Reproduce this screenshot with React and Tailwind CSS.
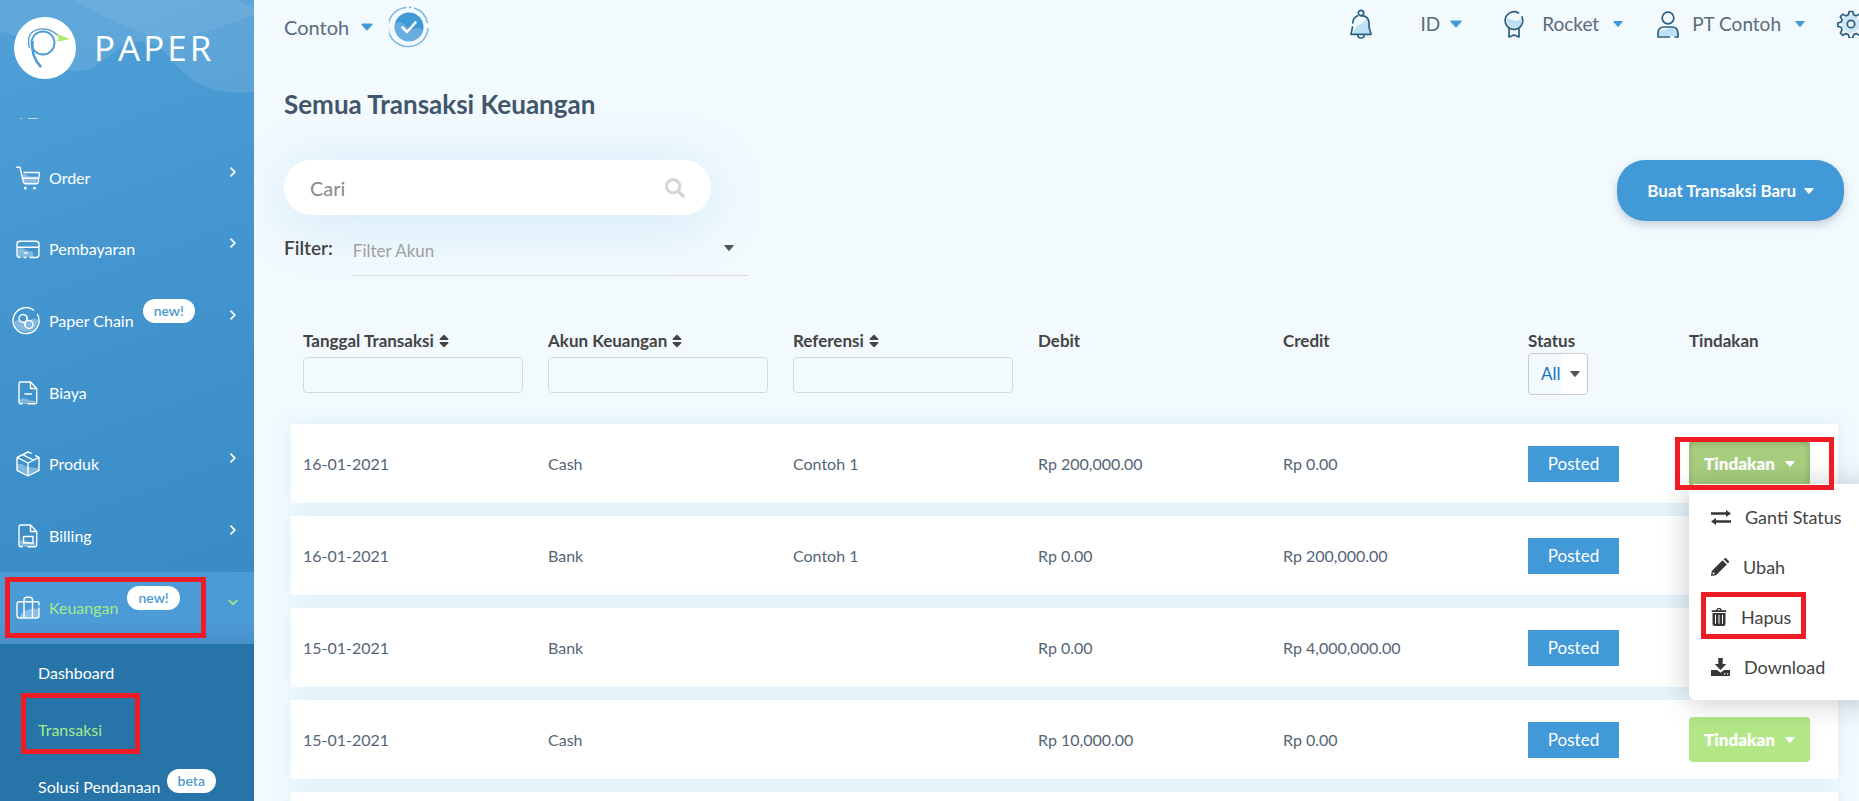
import { FaSort, FaSearch } from "react-icons/fa";

const Caret = ({ className = "" }) => (
  <svg viewBox="0 0 12 7" className={`shrink-0 ${className}`} fill="currentColor" aria-hidden="true">
    <path d="M1 0h10q1 .4.4 1.2L6.8 6.4q-.8.8-1.6 0L.6 1.2Q0 .4 1 0z" />
  </svg>
);

const lineProps = {
  fill: "none",
  stroke: "currentColor",
  strokeWidth: 1.4,
  strokeLinecap: "round",
  strokeLinejoin: "round",
};

const icons = {
  order: (
    <svg viewBox="0 0 24 24" className="h-6 w-6 shrink-0" {...lineProps}>
      <path d="M5.500 9q4-2 7 1 4 1 9 0l-1 6q-.3 1.600-2 1.600H8.500z" fill="#fff" fillOpacity=".35" stroke="none" />
      <path d="M.7 1.200h3.300l3.200 14q.5 2.600 2.600 2.600h10.500q1.600 0 1.900-1.700l1.300-9.600H8M6.300 12.300h16" />
      <circle cx="9.300" cy="22.200" r=".7" fill="#fff" />
      <circle cx="18.500" cy="22.200" r=".7" fill="#fff" />
    </svg>
  ),
  card: (
    <svg viewBox="0 0 24 24" className="h-6 w-6 shrink-0" {...lineProps}>
      <path d="M2 12q3-2 6 0 4 3 9 3v5H3q-2-1-1-8z" fill="#fff" fillOpacity=".35" stroke="none" />
      <path d="M14 20.500H20q3 0 3-3V7q0-2.700-3-2.700H4Q1 4.300 1 7v10.500q0 3 3 3M1 10.300h22M8.500 16h2.500M8 20.500h2" />
    </svg>
  ),
  chain: (
    <svg viewBox="0 0 28 28" className="h-7 w-7 shrink-0" {...lineProps}>
      <path d="M2 15q4-4 9-1 3 4 6 0 4-4 9-1-.5 6-5 10-7 4-14 0-4-3-5-8z" fill="#fff" fillOpacity=".35" stroke="none" />
      <path d="M21.500 3A13 13 0 1 0 25.500 7.500" />
      <circle cx="11" cy="11.500" r="4" />
      <circle cx="17" cy="17.500" r="4" />
      <path d="M14.800 9v5.500M13.200 14.500v5" />
    </svg>
  ),
  expense: (
    <svg viewBox="0 0 24 24" className="h-6 w-6 shrink-0" {...lineProps}>
      <path d="M3.500 19q3-3 7-1 5 2 9 2l-1 3H5q-1.500-1-1.500-4z" fill="#fff" fillOpacity=".35" stroke="none" />
      <path d="M12 22.700h7q1.700 0 1.700-1.700V7.500L14.500 1H4.700Q3 1 3 2.700V21q0 1.700 1.700 1.700H6M14.500 1v6.500h6M9 13h6.500" />
    </svg>
  ),
  product: (
    <svg viewBox="0 0 24 26" className="h-[26px] w-6 shrink-0" {...lineProps}>
      <path d="M1.500 13q4-1 8 2 6 2 13 2v2L12 24.500 1.500 19z" fill="#fff" fillOpacity=".35" stroke="none" />
      <path d="M15 2.200 12 1 1 6.300v13L12 25l11-5.700v-13L19.500 4.600M1 6.300 12 12l11-5.700M12 12v13M6.500 3.700l11 5.500" />
    </svg>
  ),
  billing: (
    <svg viewBox="0 0 24 24" className="h-6 w-6 shrink-0" {...lineProps}>
      <path d="M3.500 17q3-2 7 0 5 2 9 1v4.700H5q-1.500-1-1.500-5z" fill="#fff" fillOpacity=".35" stroke="none" />
      <path d="M12 22.700h7q1.700 0 1.700-1.700V7.500L14.500 1H4.700Q3 1 3 2.700V21q0 1.700 1.700 1.700H6M14.500 1v6.500h6M7.500 12.500h9.500v6.500H7.500z" />
    </svg>
  ),
  finance: (
    <svg viewBox="0 0 24 24" className="h-6 w-6 shrink-0" {...lineProps}>
      <path d="M4 21q2-6 6-6.500 6-3 12.500-1.500V20q-.5 1.500-2 1.500H4z" fill="#fff" fillOpacity=".35" stroke="none" />
      <path d="M23 9V7.500Q23 5.800 21 5.800H3Q1 5.800 1 8v11.500q0 2.500 2.300 2.500h17.400q2.300 0 2.300-2.500V12M8 22V4q0-2.800 2.500-2.800h3.300Q16.500 1.200 16.500 4v18" />
    </svg>
  ),
};

const menu = [
  { label: "Order", icon: "order", arrow: true },
  { label: "Pembayaran", icon: "card", arrow: true },
  { label: "Paper Chain", icon: "chain", badge: "new!", arrow: true },
  { label: "Biaya", icon: "expense" },
  { label: "Produk", icon: "product", arrow: true },
  { label: "Billing", icon: "billing", arrow: true },
];

const Pill = ({ children }) => (
  <span className="flex h-6 items-center rounded-full bg-white px-[11px] text-sm font-semibold text-[#4a99d3]">
    {children}
  </span>
);

const Chevron = ({ open }) => (
  <svg viewBox="0 0 10 10" className="mb-3 ml-auto h-2.5 w-2.5" fill="none" stroke="currentColor" strokeWidth="1.700" aria-hidden="true">
    {open ? <path d="M.7 3 5 7.200 9.300 3" /> : <path d="M2.500.7 6.800 5 2.500 9.300" />}
  </svg>
);

function Logo() {
  return (
    <div className="relative flex items-center gap-[18px] pt-[17px] pl-3.5">
      <svg viewBox="0 0 62 62" className="h-[62px] w-[62px]" aria-hidden="true">
        <circle cx="31" cy="31" r="31" fill="#fff" />
        <g fill="none" stroke="#4a9ad4">
          <circle cx="29" cy="26" r="11.500" strokeWidth="1.800" />
          <path d="M15.500 31Q11 13 28 11.800q9-.3 16 6.700" strokeWidth="1.300" />
          <path d="M18.500 24q-2 15 8.500 26" strokeWidth="2.600" />
        </g>
        <path d="M43 17l13 5-10 2.200-3.500-.7 2.500-1.500z" fill="#a9ee68" />
      </svg>
      <span className="font-[Open_Sans,Noto_Sans,sans-serif] text-[35px] font-medium tracking-[3px] text-white">PAPER</span>
    </div>
  );
}

function Sidebar() {
  return (
    <aside className="relative flex w-[254px] shrink-0 flex-col bg-linear-160 from-[#4f9fd8] to-[#2f84be] text-white">
      <svg viewBox="0 0 254 100" className="absolute inset-x-0 top-0 w-full" aria-hidden="true">
        <path d="M0 32Q20 34 38 52 60 76 88 70 106 60 124 44 150 34 172 60 200 98 254 92V0H0z" fill="#fff" fillOpacity=".1" />
        <path d="M72 0Q140 36 162 39 200 38 254 14V8L236 0z" fill="#fff" fillOpacity=".07" />
      </svg>
      <Logo />
      <div className="flex h-[63px] shrink-0 items-center gap-1.5 px-5 pt-4">
        <span className="h-px w-0.5 bg-white/60" />
        <span className="h-px w-2.5 bg-white/60" />
      </div>
      <nav className="flex grow flex-col">
        <ul className="grid h-[430px] auto-rows-fr">
          {menu.map((m) => (
            <li key={m.label}>
              <a href="#" className="flex h-full items-center gap-[9px] pr-4 pl-4">
                <span className="flex w-6 justify-end">{icons[m.icon]}</span>
                <span>{m.label}</span>
                {m.badge && <span className="mb-5"><Pill>{m.badge}</Pill></span>}
                {m.arrow && <Chevron />}
              </a>
            </li>
          ))}
        </ul>
        <a href="#" className="relative flex h-18 shrink-0 items-center gap-[9px] bg-linear-to-b from-[#4a9bd6] from-70% to-[#4a8fc9] pr-4 pl-4 text-[#a3ec8b]">
          <span className="text-white">{icons.finance}</span>
          <span>Keuangan</span>
          <span className="mb-5"><Pill>new!</Pill></span>
          <Chevron open />
          <span className="absolute top-[5px] left-[5px] h-[61px] w-[201px] border-5 border-[#ee1c25]" />
        </a>
        <ul className="grow bg-[#2775a8]">
          <li><a href="#" className="flex h-[57px] items-center px-[38px]">Dashboard</a></li>
          <li className="relative">
            <a href="#" className="flex h-[57px] items-center px-[38px] text-[#a3ec8b]">Transaksi</a>
            <span className="absolute -top-2 left-[21px] h-[61px] w-[119px] border-5 border-[#ee1c25]" />
          </li>
          <li>
            <a href="#" className="flex h-[57px] items-center gap-1.5 pl-[38px]">
              Solusi Pendanaan
              <span className="mb-3"><Pill>beta</Pill></span>
            </a>
          </li>
        </ul>
      </nav>
    </aside>
  );
}

const topLine = { ...lineProps, stroke: "#2c5f80", strokeWidth: 1.7 };

function Header() {
  return (
    <header className="flex h-[54px] items-center text-xl text-[#5a6b7a]">
      <button className="flex items-center gap-3">
        Contoh
        <Caret className="h-2 w-3 text-[#4199d7]" />
      </button>
      <svg viewBox="0 0 40 42" className="ml-4 h-[42px] w-10" aria-hidden="true">
        <g fill="none" stroke="#7db8e3" strokeWidth="1.500">
          <path d="M17.500 1.500A19.500 19.500 0 0 0 20 40.500 19.500 19.500 0 0 0 39 22M38.500 17A19.500 19.500 0 0 0 25 2M20 1.300l2.500.2" />
        </g>
        <circle cx="20" cy="21" r="14.500" fill="#4199d7" />
        <path d="M6 18q5-4 9 0 3 5 9 5 6-2 10 1-2 9-11 11.500-12 2-17-9-1-4 0-8.500z" fill="#fff" fillOpacity=".2" />
        <path d="m13.500 21.500 4.500 4.500 8.500-9.500" fill="none" stroke="#fff" strokeWidth="2.600" strokeLinecap="round" strokeLinejoin="round" />
      </svg>
      <div className="ml-auto flex h-12 shrink-0 items-center self-start text-[19px]">
        <button aria-label="Notifikasi">
          <svg viewBox="0 0 22 30" className="h-[30px] w-[22px]" {...topLine}>
            <path d="M3 25q1-6 6-9 5-2 8-7l1.500 6 1.500 9.500z" fill="#bfdff4" stroke="none" />
            <circle cx="11" cy="4" r="2.700" />
            <path d="M7.500 6.800Q3 9 2.700 14M2.500 18 1 25.300h20L19 18v-4.500Q18.500 6.600 11 6.600M7.500 25.500q.3 3.500 3.500 3.500t3.500-3.500" />
          </svg>
        </button>
        <button className="ml-12 flex items-center gap-2.5">
          ID
          <Caret className="h-2 w-3 text-[#4199d7]" />
        </button>
        <button className="ml-[42px] flex items-center gap-[18px]">
          <svg viewBox="0 0 20 28" className="h-7 w-5" {...topLine}>
            <path d="M2.500 9q3-1 6 1 5 2 9-1 0 8-7.500 9-7-1-7.500-9z" fill="#bfdff4" stroke="none" />
            <path d="M14.500 3A8.800 8.800 0 1 0 18 7M5 18.500v8.500l5-2 5 2v-8.500" />
          </svg>
          <span className="flex items-center gap-3.5">
            Rocket
            <Caret className="h-1.5 w-2.5 text-[#4199d7]" />
          </span>
        </button>
        <button className="ml-[34px] flex items-center gap-[13px]">
          <svg viewBox="0 0 22 27" className="h-[27px] w-[22px]" {...topLine}>
            <path d="M2 20q5 0 8-2 5-2 9-1 2 2 2 8H2z" fill="#bfdff4" stroke="none" />
            <circle cx="11" cy="7" r="5.800" />
            <path d="M12.500 26H1v-3.500q0-6.500 6-6.500h8q6 0 6 6.500V26h-3" />
          </svg>
          <span className="flex items-center gap-3.5">
            PT Contoh
            <Caret className="h-1.5 w-2.5 text-[#4199d7]" />
          </span>
        </button>
        <button className="ml-8 w-[22px]" aria-label="Pengaturan">
          <svg viewBox="0 0 28 28" className="h-7 w-7 max-w-none" {...topLine}>
            <circle cx="14" cy="14" r="9" fill="#cfe6f6" stroke="none" />
            <path d="M12.200 1.500h3.600l.8 3.300 2.600 1.100 2.900-1.800 2.500 2.600-1.700 2.900 1 2.600 3.300.8v3.400l-3.300.9-1 2.500 1.700 3-2.500 2.500-2.900-1.700-2.600 1-.8 3.400h-3.600l-.8-3.400-2.600-1-2.900 1.700-2.500-2.500 1.700-3-1-2.500-3.300-.9V13l3.300-.8 1-2.600-1.700-2.900 2.500-2.600 2.900 1.800 2.600-1.100z" />
            <circle cx="14" cy="14" r="3.700" fill="#f2fafe" />
          </svg>
        </button>
      </div>
    </header>
  );
}

const actions = [
  {
    label: "Ganti Status",
    icon: (
      <svg viewBox="0 0 20 15" className="h-[15px] w-5" fill="currentColor">
        <path d="M0 2.300h15V0l5 3.500L15 7V4.800H0zM20 10.200H5V8l-5 3.500L5 15v-2.300h15z" />
      </svg>
    ),
  },
  {
    label: "Ubah",
    icon: (
      <svg viewBox="0 0 18 18" className="h-[18px] w-[18px]" fill="currentColor">
        <path d="m12.600 1.100.7-.7q1-.8 2 0l2.300 2.300q.8 1 0 2l-.7.700zM11.500 2.200l4.300 4.300L5 17.200l-5 .8.800-5zM2 14l-.4 2.400L4 16z" fillRule="evenodd" />
      </svg>
    ),
  },
  {
    label: "Hapus",
    marked: true,
    icon: (
      <svg viewBox="0 0 16 18" className="h-[18px] w-4" fill="currentColor">
        <path fillRule="evenodd" d="M5 2.300 6 .4Q6.300 0 7 0h2q.7 0 1 .4l1 1.900h4.300V4H.7V2.300zM6.600 2.300h2.800L9 1.200H7zM1.500 5h13v11q0 2-2 2h-9q-2 0-2-2zM4 6.800v9h1v-9zM7.500 6.800v9h1v-9zM11 6.800v9h1v-9z" />
      </svg>
    ),
  },
  {
    label: "Download",
    icon: (
      <svg viewBox="0 0 19 18" className="h-[18px] w-[19px]" fill="currentColor">
        <path fillRule="evenodd" d="M7.300 0h4.400v6h3.600L9.500 12 3.700 6h3.600zM0 12h6l3.500 2.700L13 12h6v6H0zM13 15.200v1.300h1.300v-1.300zM16 15.200v1.300h1.300v-1.300z" />
      </svg>
    ),
  },
];

function ActionMenu() {
  return (
    <div className="absolute top-full left-0 z-10 -mt-0.5 w-[190px] rounded-md bg-white py-2 shadow-[0_2px_30px_rgba(0,0,0,0.22)]">
      {actions.map((a) => (
        <button key={a.label} className="relative flex h-[50px] w-full items-center gap-3.5 pl-[22px] text-left text-lg font-normal text-[#444]">
          <span className="text-[#363636]">{a.icon}</span>
          {a.label}
          {a.marked && <span className="absolute top-0 left-3 h-[47px] w-[105px] border-5 border-[#ee1c25]" />}
        </button>
      ))}
    </div>
  );
}

const rows = [
  ["16-01-2021", "Cash", "Contoh 1", "Rp 200,000.00", "Rp 0.00"],
  ["16-01-2021", "Bank", "Contoh 1", "Rp 0.00", "Rp 200,000.00"],
  ["15-01-2021", "Bank", "", "Rp 0.00", "Rp 4,000,000.00"],
  ["15-01-2021", "Cash", "", "Rp 10,000.00", "Rp 0.00"],
];

const openRow = 0;
// The open menu spans the two rows below it, so their buttons stay hidden.
const isCovered = (i) => i > openRow && i <= openRow + 2;

function Transactions() {
  return (
    <table className="w-full table-fixed border-separate border-spacing-x-0 border-spacing-y-[13px] text-base text-[#556575]">
      <colgroup>
        <col /><col /><col /><col /><col />
        <col className="w-[161px]" />
        <col className="w-[161px]" />
      </colgroup>
      <thead className="text-left text-[17px] leading-6 text-[#444]">
        <tr className="h-[82px] align-top">
          {["Tanggal Transaksi", "Akun Keuangan", "Referensi"].map((t) => (
            <th key={t} className="pr-[13px] pl-3 font-bold" scope="col">
              <label className="flex flex-col gap-1">
                <span className="flex items-center gap-1">{t}<FaSort className="h-4 w-3" /></span>
                <input className="h-9 w-full rounded-sm border border-[#d6d9dc] bg-transparent px-2 font-normal" />
              </label>
            </th>
          ))}
          <th className="pl-3 font-bold" scope="col">Debit</th>
          <th className="pl-3 font-bold" scope="col">Credit</th>
          <th className="pl-3 font-bold" scope="col">
            <label className="block" htmlFor="status">Status</label>
            <div className="relative w-[60px]">
              <select id="status" className="h-[42px] w-full appearance-none rounded-sm border border-[#ccc] bg-linear-to-r from-transparent from-57% to-white to-57% pl-3 font-normal text-[#2171c1]">
                <option>All</option>
              </select>
              <Caret className="pointer-events-none absolute top-[18px] right-2 h-1.5 w-2.5 text-[#555]" />
            </div>
          </th>
          <th className="pl-3 font-bold" scope="col">Tindakan</th>
        </tr>
      </thead>
      <tbody>
        {rows.map((r, i) => (
          <tr key={i} className="h-[79px] bg-white shadow-[0_0_20px_rgba(65,153,215,0.12)]">
            {r.map((c, j) => <td key={j} className="pl-3">{c}</td>)}
            <td className="pl-3">
              <span className="flex h-9 w-[91px] items-center justify-center bg-[#4199d7] text-[17px] text-white">Posted</span>
            </td>
            <td className="pl-3">
              <div className="relative w-[121px]">
                {!isCovered(i) && (
                  <button className={`flex h-[45px] w-full items-center justify-center gap-2.5 rounded-sm text-[17px] font-extrabold text-white ${i === openRow ? "bg-[#a8cf7f] shadow-[inset_0_2px_6px_rgba(0,0,0,0.2)]" : "bg-[#b2e687]"}`}>
                    Tindakan
                    <Caret className="h-1.5 w-2.5" />
                  </button>
                )}
                {i === openRow && <ActionMenu />}
                {i === openRow && <span className="absolute -top-1 -left-3.5 z-20 h-[53px] w-[159px] border-5 border-[#ee1c25]" />}
              </div>
            </td>
          </tr>
        ))}
        <tr className="h-[79px] bg-white shadow-[0_0_20px_rgba(65,153,215,0.12)]">
          <td colSpan={7} />
        </tr>
      </tbody>
    </table>
  );
}

export default function App() {
  return (
    <div className="flex h-screen overflow-hidden bg-[#f2fafe] font-[Lato,sans-serif]">
      <Sidebar />
      <main className="min-w-0 grow pl-[30px]">
        <Header />
        <h1 className="mt-[34px] text-[26px] leading-8 font-bold text-[#42566b]">Semua Transaksi Keuangan</h1>
        <div className="mt-10 flex items-start justify-between pr-[15px]">
          <label className="flex h-[55px] w-[427px] items-center rounded-full bg-white px-[26px] shadow-[0_8px_60px_rgba(65,153,215,0.2)]">
            <span className="hidden">Cari</span>
            <input aria-label="Cari" placeholder="Cari" className="h-10 min-w-0 grow text-xl outline-none placeholder:text-[#8a8a8a]" />
            <FaSearch className="h-5 w-5 text-[#d5d5d5]" />
          </label>
          <button className="flex h-[61px] items-center gap-2 rounded-[28px] bg-[#4199d7] px-[30px] text-[17px] font-bold text-white shadow-[0_4px_8px_rgba(60,80,110,0.25)]">
            Buat Transaksi Baru
            <Caret className="h-1.5 w-2.5" />
          </button>
        </div>
        <div className="flex items-center gap-5">
          <label htmlFor="akun" className="text-[19px] font-semibold text-[#444]">Filter:</label>
          <div className="relative w-[395px]">
            <select id="akun" className="h-[55px] w-full appearance-none border-b border-[#d8dadc] pt-1.5 text-[17px] text-[#a0a0a0]">
              <option>Filter Akun</option>
            </select>
            <Caret className="pointer-events-none absolute top-6 right-3.5 h-1.5 w-2.5 text-[#555]" />
          </div>
        </div>
        <div className="mt-10 pr-[21px] pl-[7px]">
          <Transactions />
        </div>
      </main>
    </div>
  );
}
